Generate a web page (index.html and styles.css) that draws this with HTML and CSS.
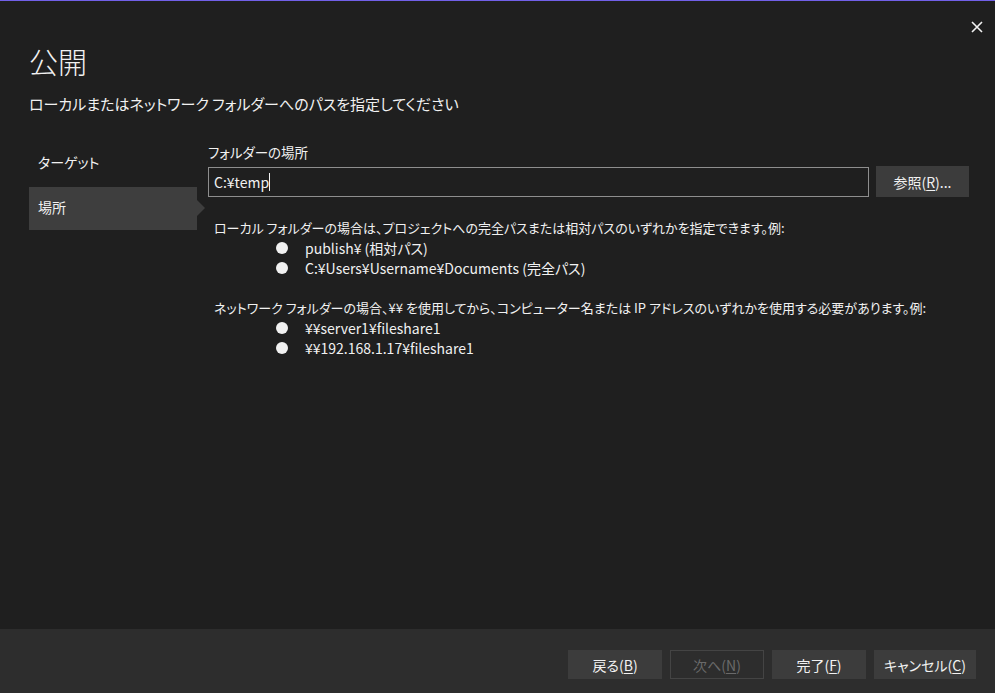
FILE: index.html
```html
<!DOCTYPE html>
<html lang="ja">
<head>
<meta charset="utf-8">
<title>公開</title>
<link rel="stylesheet" href="styles.css">
</head>
<body>
<div class="dialog">
  <button class="close" aria-label="閉じる">
    <svg width="12" height="12" viewBox="0 0 12 12"><path d="M1 1 L11 11 M11 1 L1 11" stroke="#f1f1f1" stroke-width="1.6" fill="none"/></svg>
  </button>
  <header class="header">
    <h1 class="title">公開</h1>
    <p class="subtitle">ローカルまたはネットワーク フォルダーへのパスを指定してください</p>
  </header>
  <div class="main">
    <nav class="nav">
      <div class="nav-item">ターゲット</div>
      <div class="nav-item selected">場所</div>
    </nav>
    <section class="content">
      <div class="label">フォルダーの場所</div>
      <div class="path-row">
        <div class="input"><span>C:¥temp</span><span class="caret"></span></div>
        <button class="btn browse">参照(<u>R</u>)...</button>
      </div>
      <div class="help">
        <p class="help-line">ローカル フォルダーの場合は、プロジェクトへの完全パスまたは相対パスのいずれかを指定できます。例:</p>
        <ul class="bullets">
          <li>publish¥ (相対パス)</li>
          <li>C:¥Users¥Username¥Documents (完全パス)</li>
        </ul>
        <p class="help-line gap">ネットワーク フォルダーの場合、¥¥ を使用してから、コンピューター名または IP アドレスのいずれかを使用する必要があります。例:</p>
        <ul class="bullets">
          <li>¥¥server1¥fileshare1</li>
          <li>¥¥192.168.1.17¥fileshare1</li>
        </ul>
      </div>
    </section>
  </div>
  <footer class="footer">
    <button class="btn fbtn">戻る(<u>B</u>)</button>
    <button class="btn fbtn disabled">次へ(<u>N</u>)</button>
    <button class="btn fbtn">完了(<u>F</u>)</button>
    <button class="btn fbtn wide">キャンセル(<u>C</u>)</button>
  </footer>
</div>
</body>
</html>
```
FILE: styles.css
```css
* { box-sizing: border-box; }
html, body { margin: 0; padding: 0; }
body {
  background: #1f1f1f;
  color: #f1f1f1;
  font-family: "Noto Sans CJK JP", "Noto Sans", sans-serif;
  font-feature-settings: "palt";
  width: 995px;
  height: 693px;
  overflow: hidden;
}
.dialog {
  position: relative;
  width: 995px;
  height: 693px;
  border-top: 1px solid #7160e8;
  display: flex;
  flex-direction: column;
}
.close {
  position: absolute;
  top: 19px;
  right: 11px;
  width: 14px;
  height: 14px;
  padding: 0;
  border: 0;
  background: transparent;
  display: flex;
  align-items: center;
  justify-content: center;
}
.header { padding: 40px 0 0 29px; }
.title {
  margin: 0;
  font-weight: 300;
  font-size: 29px;
  line-height: 40px;
  color: #f1f1f1;
}
.subtitle {
  margin: 12px 0 0 0;
  font-size: 15px;
  line-height: 22px;
  font-weight: 400;
}
.main {
  display: flex;
  flex: 1;
  padding: 27px 0 0 29px;
}
.nav {
  width: 168px;
  display: flex;
  flex-direction: column;
  gap: 2px;
}
.nav-item {
  height: 43px;
  display: flex;
  align-items: center;
  padding: 0 0 4px 9px;
  font-size: 14px;
  position: relative;
}
.nav-item.selected { background: #3e3e3e; }
.nav-item.selected::after {
  content: "";
  position: absolute;
  right: -8px;
  top: 13px;
  border-left: 8px solid #3e3e3e;
  border-top: 8px solid transparent;
  border-bottom: 8px solid transparent;
}
.content {
  margin-left: 11px;
  width: 762px;
  display: flex;
  flex-direction: column;
}
.label {
  font-size: 13.5px;
  line-height: 20px;
}
.path-row {
  display: flex;
  align-items: flex-start;
  margin-top: 5px;
}
.input {
  width: 661px;
  height: 30px;
  border: 1px solid #8e8e8e;
  background: #1f1f1f;
  display: flex;
  align-items: center;
  padding-left: 5px;
  font-size: 14px;
}
.caret {
  display: inline-block;
  width: 1px;
  height: 18px;
  background: #f1f1f1;
}
.btn {
  font-family: inherit;
  font-feature-settings: "palt";
  color: #f1f1f1;
  background: #3c3c3c;
  border: 1px solid #3c3c3c;
  font-size: 14px;
  padding: 0;
  display: flex;
  align-items: center;
  justify-content: center;
}
.btn u { text-underline-offset: 2px; }
.browse {
  width: 93px;
  height: 31px;
  margin-left: 7px;
  margin-top: -1px;
}
.help { padding-left: 6px; margin-top: 21px; }
.help-line {
  margin: 0;
  font-size: 13px;
  line-height: 20px;
  white-space: nowrap;
}
.help-line.gap { margin-top: 20px; }
.bullets {
  list-style: none;
  margin: 0;
  padding: 0 0 0 91px;
}
.bullets li {
  font-size: 14px;
  line-height: 20px;
  position: relative;
}
.bullets li::before {
  content: "";
  position: absolute;
  left: -29px;
  top: 4px;
  width: 12px;
  height: 12px;
  border-radius: 50%;
  background: #f1f1f1;
}
.footer {
  height: 64px;
  background: #2d2d2d;
  display: flex;
  justify-content: flex-end;
  align-items: flex-start;
  gap: 8px;
  padding: 21px 19px 0 0;
}
.fbtn {
  width: 94px;
  height: 29px;
  background: #3c3c3c;
}
.fbtn.wide { width: 102px; }
.fbtn.disabled {
  background: transparent;
  border-color: #444444;
  color: #6a6a6a;
}
```
